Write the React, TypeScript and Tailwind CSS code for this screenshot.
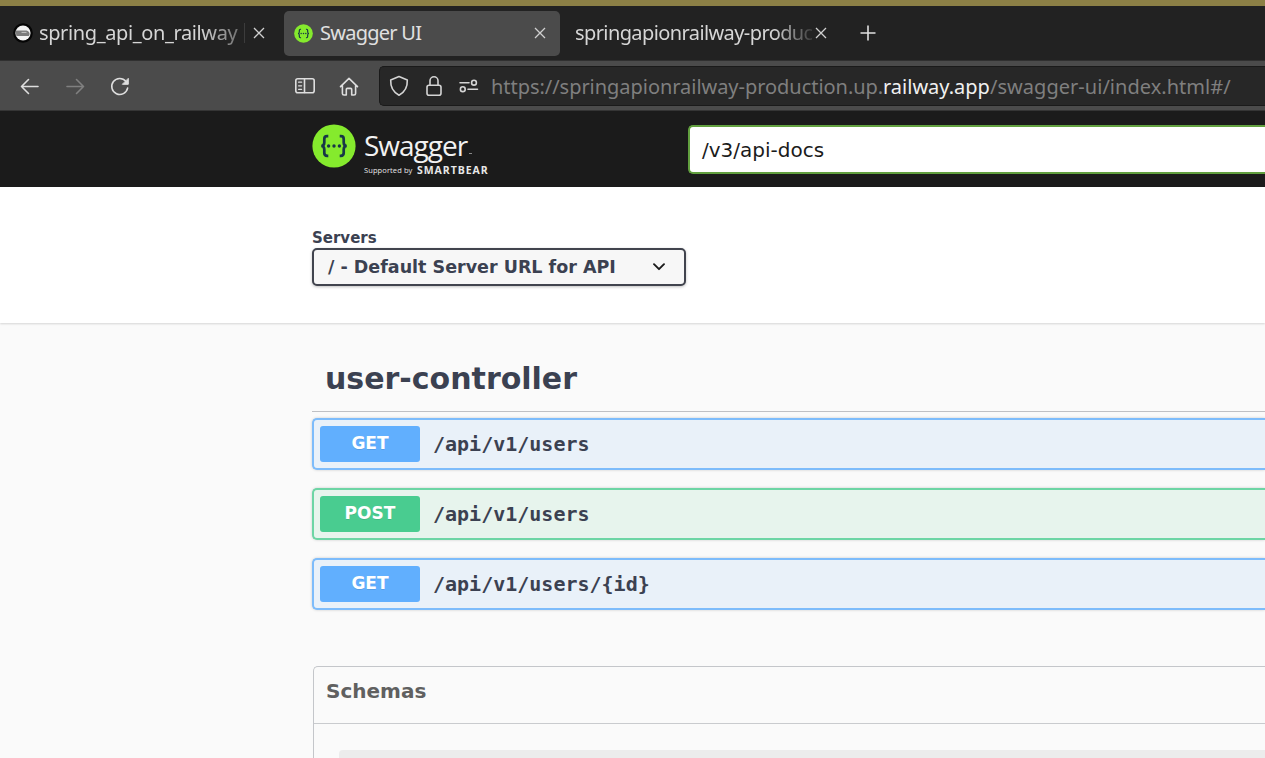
import type { ReactNode } from "react";

const UI_FONT = "font-['Noto_Sans','Open_Sans',sans-serif]";

function Close() {
  return (
    <svg viewBox="0 0 12 12" className="size-3 shrink-0" fill="none" stroke="#d0d0d0" strokeWidth="1.3">
      <path d="M1 1 L11 11 M11 1 L1 11" />
    </svg>
  );
}

function Favicon() {
  return (
    <svg viewBox="0 0 20 20" className="size-5 shrink-0">
      <circle cx="10" cy="10" r="9.8" fill="#050505" />
      <circle cx="10" cy="10" r="7.6" fill="#f4f4f4" />
      <path d="M2.4 7.6 H13.5 Q16.4 8.2 16.6 11 L16 13 H3.4 Z" fill="#7c7c7c" />
      <path d="M8.5 9.4 H13.5" stroke="#c5c5c5" strokeWidth="1" />
    </svg>
  );
}

function Braces({ className }: { className: string }) {
  return (
    <svg viewBox="0 0 44 44" className={className}>
      <circle cx="22" cy="22" r="21.6" fill="#85ea2d" />
      <g fill="none" stroke="#173647" strokeWidth="2.7">
        <path d="M16.3 12.2 h-1.2 q-2.8 0 -2.8 2.8 v3.6 q0 3.2 -3 3.4 q3 .2 3 3.4 v3.6 q0 2.8 2.8 2.8 h1.2" />
        <path d="M27.7 12.2 h1.2 q2.8 0 2.8 2.8 v3.6 q0 3.2 3 3.4 q-3 .2 -3 3.4 v3.6 q0 2.8 -2.8 2.8 h-1.2" />
      </g>
      <g fill="#173647">
        <circle cx="16.6" cy="22" r="1.7" />
        <circle cx="22" cy="22" r="1.7" />
        <circle cx="27.4" cy="22" r="1.7" />
      </g>
    </svg>
  );
}

function Glyph({ className, children }: { className: string; children: ReactNode }) {
  return (
    <svg
      viewBox="0 0 22 22"
      className={`size-[22px] shrink-0 ${className}`}
      fill="none"
      stroke="currentColor"
      strokeWidth="1.6"
      strokeLinecap="round"
      strokeLinejoin="round"
    >
      {children}
    </svg>
  );
}

function TabStrip() {
  return (
    <div className={`flex h-[54px] shrink-0 items-center bg-[#222222] text-[20px] text-[#d6d6d6] ${UI_FONT}`}>
      <div className="flex w-[284px] shrink-0 items-center pl-[13px]">
        <Favicon />
        <span className="ml-[6px] w-[202px] shrink-0 whitespace-nowrap tracking-[-0.38px] [mask-image:linear-gradient(to_right,#000_80%,#0006_100%)]">
          spring_api_on_railway
        </span>
        <span className="mr-[8px] ml-[3px] h-5 w-px bg-[#3c3c3c]" />
        <Close />
      </div>
      <div className="flex h-[45px] w-[276px] shrink-0 items-center rounded-[5px] bg-[#4b4b4b] pr-[14px] pl-[10px]">
        <Braces className="size-[19px] shrink-0" />
        <span className="ml-[7px] flex-1 whitespace-nowrap tracking-[-0.75px] text-[#e0e0e0]">Swagger UI</span>
        <Close />
      </div>
      <div className="flex w-[269px] shrink-0 items-center pl-[15px]">
        <span className="w-[237px] shrink-0 whitespace-nowrap tracking-[-0.6px] [mask-image:linear-gradient(to_right,#000_84%,#0002_100%)]">
          springapionrailway-produc
        </span>
        <span className="ml-[3px]">
          <Close />
        </span>
      </div>
      <svg viewBox="0 0 16 16" className="ml-[31px] size-4" stroke="#e0e0e0" strokeWidth="1.6">
        <path d="M8 .5 V15.5 M.5 8 H15.5" />
      </svg>
    </div>
  );
}

function Toolbar() {
  return (
    <div className="flex h-[50px] shrink-0 items-center border-t border-[#303030] bg-[#4b4b4b] pl-[19px] text-[#dedede]">
      <Glyph className="">
        <path d="M19 11.5 H2.5 M9.5 4.5 L2.5 11.5 L9.5 18.5" />
      </Glyph>
      <Glyph className="ml-[23px] text-[#808080]">
        <path d="M3 11.5 H19.5 M12.5 4.5 L19.5 11.5 L12.5 18.5" />
      </Glyph>
      <Glyph className="ml-[23px]">
        <path d="M18.6 13.1 A8 8 0 1 1 16.9 6.3" />
        <path d="M19.3 3.7 V9.3 H13.7 Z" fill="currentColor" strokeWidth="1" />
      </Glyph>
      <Glyph className="ml-[163px]">
        <rect x="1.8" y="3.8" width="18.4" height="14" rx="2" />
        <path d="M10.5 4 V17.5" />
        <path d="M4.6 7.2 H7.6 M4.6 10.8 H7.6 M4.6 14.3 H7.6" strokeWidth="1.3" />
      </Glyph>
      <Glyph className="ml-[22px]">
        <path d="M2.5 11.6 L11 3.4 L19.5 11.6 M4.4 10.4 V18.4 Q4.4 20 6 20 H8.3 V14.4 Q8.3 13.4 9.3 13.4 H12.7 Q13.7 13.4 13.7 14.4 V20 H16 Q17.6 20 17.6 18.4 V10.4" />
      </Glyph>
      <div className={`ml-[19px] flex h-10 flex-1 items-center rounded-l-[5px] border border-r-0 border-[#1a1a1a] bg-[#272727] pl-[8px] text-[20px] text-[#7f7f7f] ${UI_FONT}`}>
        <Glyph className="text-[#d4d4d4]">
          <path d="M11 1.6 L19.3 5 Q19.8 15.5 11 20.2 Q2.2 15.5 2.7 5 Z" />
        </Glyph>
        <Glyph className="ml-[13px] text-[#d4d4d4]">
          <rect x="4" y="10.2" width="14" height="10" rx="2" />
          <path d="M7 10 V5.8 A4 4 0 0 1 15 5.8 V10" />
        </Glyph>
        <Glyph className="ml-[13px] text-[#d4d4d4]">
          <path d="M2 7.7 H11 M10 14.2 H19.5" />
          <circle cx="16" cy="7.7" r="2.4" />
          <circle cx="4.8" cy="14.2" r="2.4" />
        </Glyph>
        <div className="ml-[11px] flex pt-[2px] whitespace-nowrap">
          <span className="w-[392px] tracking-[-0.04px]">https://springapionrailway-production.up.</span>
          <span className="w-[107px] text-[#f0f0f0]">railway.app</span>
          <span className="tracking-[0.03px]">/swagger-ui/index.html#/</span>
        </div>
      </div>
    </div>
  );
}

function TopBar() {
  return (
    <div className="flex h-[77px] shrink-0 items-start border-t border-[#353535] bg-[#1b1b1b] pl-[312px]">
      <Braces className="mt-[13px] size-[44px] shrink-0" />
      <div className="ml-[8px] w-[324px] shrink-0 whitespace-nowrap text-[#f2f2f2]">
        <div className="mt-[15px] flex h-[38px] items-center font-['Open_Sans',sans-serif] text-[28px] leading-[34px] tracking-[-1px]">
          Swagger<span className="mt-[16px] ml-[2px] h-px w-[3px] bg-[#888]" />
        </div>
        <div className="flex h-3 items-center leading-3 text-[#e8e8e8]">
          <span className="w-[53px] font-['Open_Sans',sans-serif] text-[7.5px] tracking-[0.1px]">Supported by</span>
          <span className="font-['Open_Sans',sans-serif] text-[10.5px] font-bold tracking-[0.95px]">SMARTBEAR</span>
        </div>
      </div>
      <div className="mt-[14px] flex h-[49px] flex-1 items-center rounded-l-[5px] border-2 border-r-0 border-[#62a03f] bg-white pl-[12px] font-['DejaVu_Sans',sans-serif] text-[20px] text-[#1b1b1b]">
        /v3/api-docs
      </div>
    </div>
  );
}

function Servers() {
  return (
    <div className="h-[136px] shrink-0 bg-white pt-[42px] pl-[312px] font-['DejaVu_Sans',sans-serif] font-bold text-[#3b4151] shadow-[0_1px_2px_rgba(0,0,0,0.15)]">
      <div className="h-[19px] text-[15px] leading-[19px]">Servers</div>
      <div className="flex h-[38px] w-[374px] items-center justify-between rounded-[5px] border-2 border-[#41444e] bg-[#f7f7f7] pr-[19px] pl-[14px] text-[17.5px] shadow-[0_1px_3px_rgba(0,0,0,0.25)]">
        <span>/ - Default Server URL for API</span>
        <svg viewBox="0 0 12 8" className="h-2 w-3" fill="none" stroke="#1b1b1b" strokeWidth="1.9" strokeLinecap="round" strokeLinejoin="round">
          <path d="M1 1.2 L6 6.2 L11 1.2" />
        </svg>
      </div>
    </div>
  );
}

const OPERATIONS = [
  { method: "GET", path: "/api/v1/users", box: "border-[#7dbcfb] bg-[#e9f1f9]", badge: "bg-[#61affe]" },
  { method: "POST", path: "/api/v1/users", box: "border-[#6dd5a5] bg-[#e7f4ed]", badge: "bg-[#49cc90]" },
  { method: "GET", path: "/api/v1/users/{id}", box: "border-[#7dbcfb] bg-[#e9f1f9]", badge: "bg-[#61affe]" },
];

export default function App() {
  return (
    <div className="flex h-[758px] w-full flex-col overflow-hidden bg-[#fafafa]">
      <div className="h-[6px] shrink-0 bg-[#8c8046]" />
      <TabStrip />
      <Toolbar />
      <TopBar />
      <Servers />
      <main className="pl-[312px] font-['DejaVu_Sans',sans-serif] text-[#3b4151]">
        <h2 className="h-[89px] border-b border-[#bfc0c4] pt-[38px] pl-[13px] text-[30px] leading-[36px] font-bold">user-controller</h2>
        <div className="mt-[6px] flex flex-col gap-[18px]">
          {OPERATIONS.map((op, i) => (
            <div key={i} className={`flex h-[52px] items-center rounded-l-[5px] border-2 border-r-0 pl-[6px] shadow-[0_0_3px_rgba(0,0,0,0.19)] ${op.box}`}>
              <span className={`flex h-9 w-[100px] items-center justify-center rounded-[3px] text-[17px] font-bold text-white [text-shadow:0_1px_0_rgba(0,0,0,0.1)] ${op.badge}`}>
                {op.method}
              </span>
              <span className="ml-[13px] pb-px font-['DejaVu_Sans_Mono',monospace] text-[20px] font-bold">{op.path}</span>
            </div>
          ))}
        </div>
        <section className="mt-[56px] ml-px h-[120px] rounded-tl-[5px] border-t border-l border-[#c4c6ca]">
          <h3 className="flex h-[57px] items-center border-b border-[#c9cbce] pb-[8px] pl-[12px] text-[20px] font-bold text-[#606060]">Schemas</h3>
          <div className="mt-[26px] ml-[25px] h-10 rounded-tl-[4px] bg-[#ececec]" />
        </section>
      </main>
    </div>
  );
}
